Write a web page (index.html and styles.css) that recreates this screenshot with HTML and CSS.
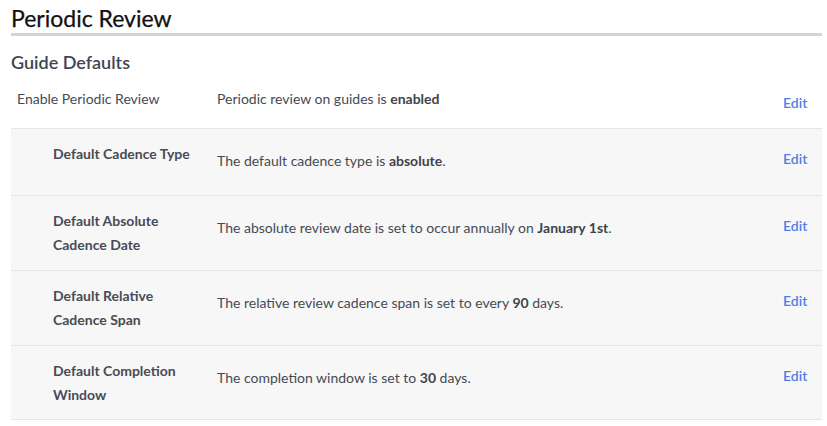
FILE: index.html
```html
<!DOCTYPE html>
<html>
<head>
<meta charset="utf-8">
<link rel="stylesheet" href="styles.css">
</head>
<body>
<div class="page">
  <h1 class="title">Periodic Review</h1>
  <h2 class="section">Guide Defaults</h2>
  <div class="settings">
    <div class="row top">
      <div class="label">Enable Periodic Review</div>
      <div class="desc">Periodic review on guides is <b>enabled</b></div>
      <a class="edit">Edit</a>
    </div>
    <div class="row sub">
      <div class="label">Default Cadence Type</div>
      <div class="desc">The default cadence type is <b>absolute</b>.</div>
      <a class="edit">Edit</a>
    </div>
    <div class="row sub">
      <div class="label">Default Absolute<br>Cadence Date</div>
      <div class="desc">The absolute review date is set to occur annually on <b>January 1st</b>.</div>
      <a class="edit">Edit</a>
    </div>
    <div class="row sub">
      <div class="label">Default Relative<br>Cadence Span</div>
      <div class="desc">The relative review cadence span is set to every <b>90</b> days.</div>
      <a class="edit">Edit</a>
    </div>
    <div class="row sub">
      <div class="label">Default Completion<br>Window</div>
      <div class="desc">The completion window is set to <b>30</b> days.</div>
      <a class="edit">Edit</a>
    </div>
  </div>
</div>
</body>
</html>
```
FILE: styles.css
```css
html, body {
  margin: 0;
  padding: 0;
  background: #ffffff;
}
body {
  font-family: Lato, "Liberation Sans", sans-serif;
  color: #464a53;
}
.page {
  padding: 0 5px 0 11px;
}
.title {
  margin: 0;
  padding-top: 3px;
  font-size: 23px;
  font-weight: 400;
  color: #111111;
  line-height: 30px;
  border-bottom: 3px solid #d1d2da;
  -webkit-text-stroke: 0.25px #111111;
}
.section {
  margin: 0;
  padding-top: 13px;
  font-size: 18px;
  font-weight: 600;
  color: #3f4552;
  line-height: 26px;
}
.settings {
  display: flex;
  flex-direction: column;
}
.row {
  display: flex;
  align-items: flex-start;
  border-bottom: 1px solid #e6e6e8;
  font-size: 14px;
}
.row.top {
  padding: 12px 0 0 6px;
  height: 41px;
}
.row.top .label {
  width: 200px;
}
.row.top .edit {
  padding-top: 4px;
}
.row.sub {
  background: #f7f7f7;
  padding: 13px 0 13px 42px;
}
.row.sub:last-child {
  padding-bottom: 12px;
}
.label {
  width: 164px;
  line-height: 24px;
}
.row.sub .label {
  font-weight: 700;
  color: #474b55;
}
.desc {
  flex: 1;
  line-height: 24px;
}
.row.sub .desc {
  padding: 7px 0 9px;
}
.desc b {
  font-weight: 700;
  color: #3f434c;
}
.edit {
  width: 39px;
  line-height: 24px;
  color: #4f7fe6;
  font-weight: 600;
  cursor: pointer;
}
.row.sub .edit {
  padding-top: 5px;
}
```
